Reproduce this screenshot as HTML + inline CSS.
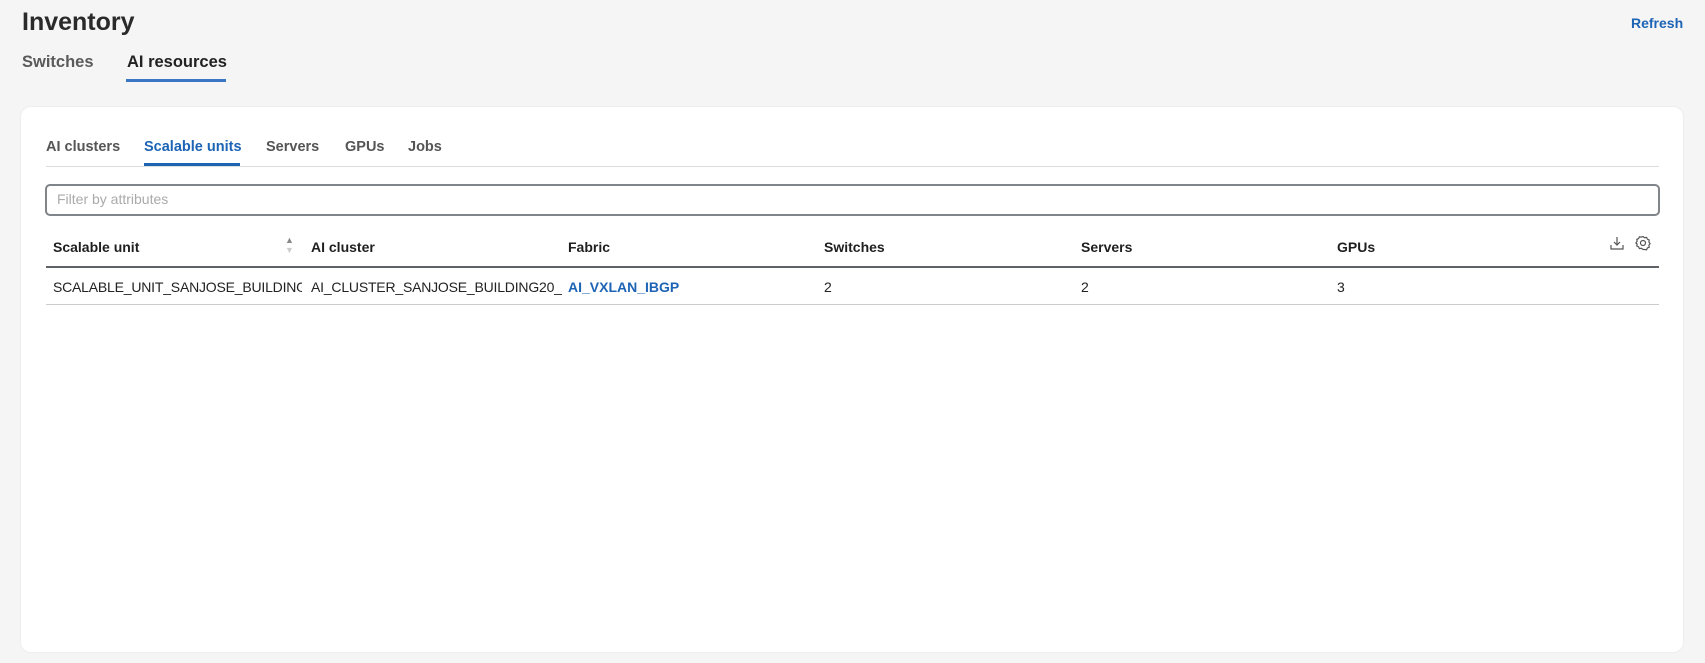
<!DOCTYPE html>
<html><head><style>
*{box-sizing:border-box;margin:0;padding:0}
body{width:1705px;height:663px;background:#f5f5f5;font-family:"Liberation Sans",sans-serif;color:#222;position:relative;overflow:hidden}
.a{position:absolute;white-space:nowrap}
.card{position:absolute;left:21px;top:107px;width:1662px;height:545px;background:#fff;border-radius:10px;box-shadow:0 0 2px rgba(0,0,0,.08)}
.th{font-weight:bold;font-size:14px;top:239px;color:#1f1f1f}
.td{font-size:14px;top:279px;color:#222;letter-spacing:-0.2px}
.st{font-size:14.5px;font-weight:bold;color:#555;top:139px}
</style></head><body>
<div class="a" style="left:22px;top:8px;font-size:25px;font-weight:bold;color:#2a2a2a">Inventory</div>
<div class="a" style="left:1631px;top:15px;font-size:14px;font-weight:bold;color:#1d64b5">Refresh</div>
<div class="a" style="left:22px;top:53px;font-size:16.5px;font-weight:bold;color:#5a5a5a">Switches</div>
<div class="a" style="left:127px;top:53px;font-size:16.5px;font-weight:bold;color:#222">AI resources</div>
<div class="a" style="left:126px;top:79px;width:100px;height:3px;background:#3a76c4"></div>
<div class="card"></div>
<div class="a st" style="left:46px">AI clusters</div>
<div class="a st" style="left:144px;color:#1d64b5">Scalable units</div>
<div class="a st" style="left:266px">Servers</div>
<div class="a st" style="left:345px">GPUs</div>
<div class="a st" style="left:408px">Jobs</div>
<div class="a" style="left:46px;top:166px;width:1613px;height:1px;background:#ddd"></div>
<div class="a" style="left:144px;top:163px;width:96px;height:3px;background:#1d64b5"></div>
<div class="a" style="left:45px;top:184px;width:1615px;height:32px;border:2px solid #80858a;border-radius:5px"></div>
<div class="a" style="left:57px;top:191px;font-size:14px;color:#aaa">Filter by attributes</div>
<div class="a th" style="left:53px">Scalable unit</div>
<div class="a" style="left:285px;top:235px;font-size:9px;color:#888;line-height:10px">▲<br><span style="color:#ccc">▼</span></div>
<div class="a th" style="left:311px">AI cluster</div>
<div class="a th" style="left:568px">Fabric</div>
<div class="a th" style="left:824px">Switches</div>
<div class="a th" style="left:1081px">Servers</div>
<div class="a th" style="left:1337px">GPUs</div>
<svg class="a" style="left:1610px;top:236px" width="14" height="14" viewBox="0 0 14 14" fill="none" stroke="#555" stroke-width="1.2"><path d="M7 1v8M4 6l3 3 3-3M1 9v4h12V9"/></svg>
<svg class="a" style="left:1635px;top:235px" width="16" height="16" viewBox="0 0 16 16" fill="none" stroke="#555" stroke-width="1.2"><path d="M8 1.5l1.6 1.2 2-.3.8 1.8 1.8.8-.3 2 1.2 1.6-1.2 1.6.3 2-1.8.8-.8 1.8-2-.3L8 14.5l-1.6-1.2-2 .3-.8-1.8-1.8-.8.3-2L.9 8l1.2-1.6-.3-2 1.8-.8.8-1.8 2 .3z"/><circle cx="8" cy="8" r="2.5"/></svg>
<div class="a" style="left:46px;top:266px;width:1613px;height:2px;background:#5f6368"></div>
<div class="a td" style="left:53px;width:249px;overflow:hidden">SCALABLE_UNIT_SANJOSE_BUILDING20</div>
<div class="a td" style="left:311px;width:252px;overflow:hidden">AI_CLUSTER_SANJOSE_BUILDING20_</div>
<div class="a td" style="left:568px;font-weight:bold;color:#1d64b5;letter-spacing:0">AI_VXLAN_IBGP</div>
<div class="a td" style="left:824px">2</div>
<div class="a td" style="left:1081px">2</div>
<div class="a td" style="left:1337px">3</div>
<div class="a" style="left:46px;top:304px;width:1613px;height:1px;background:#ccc"></div>
</body></html>
